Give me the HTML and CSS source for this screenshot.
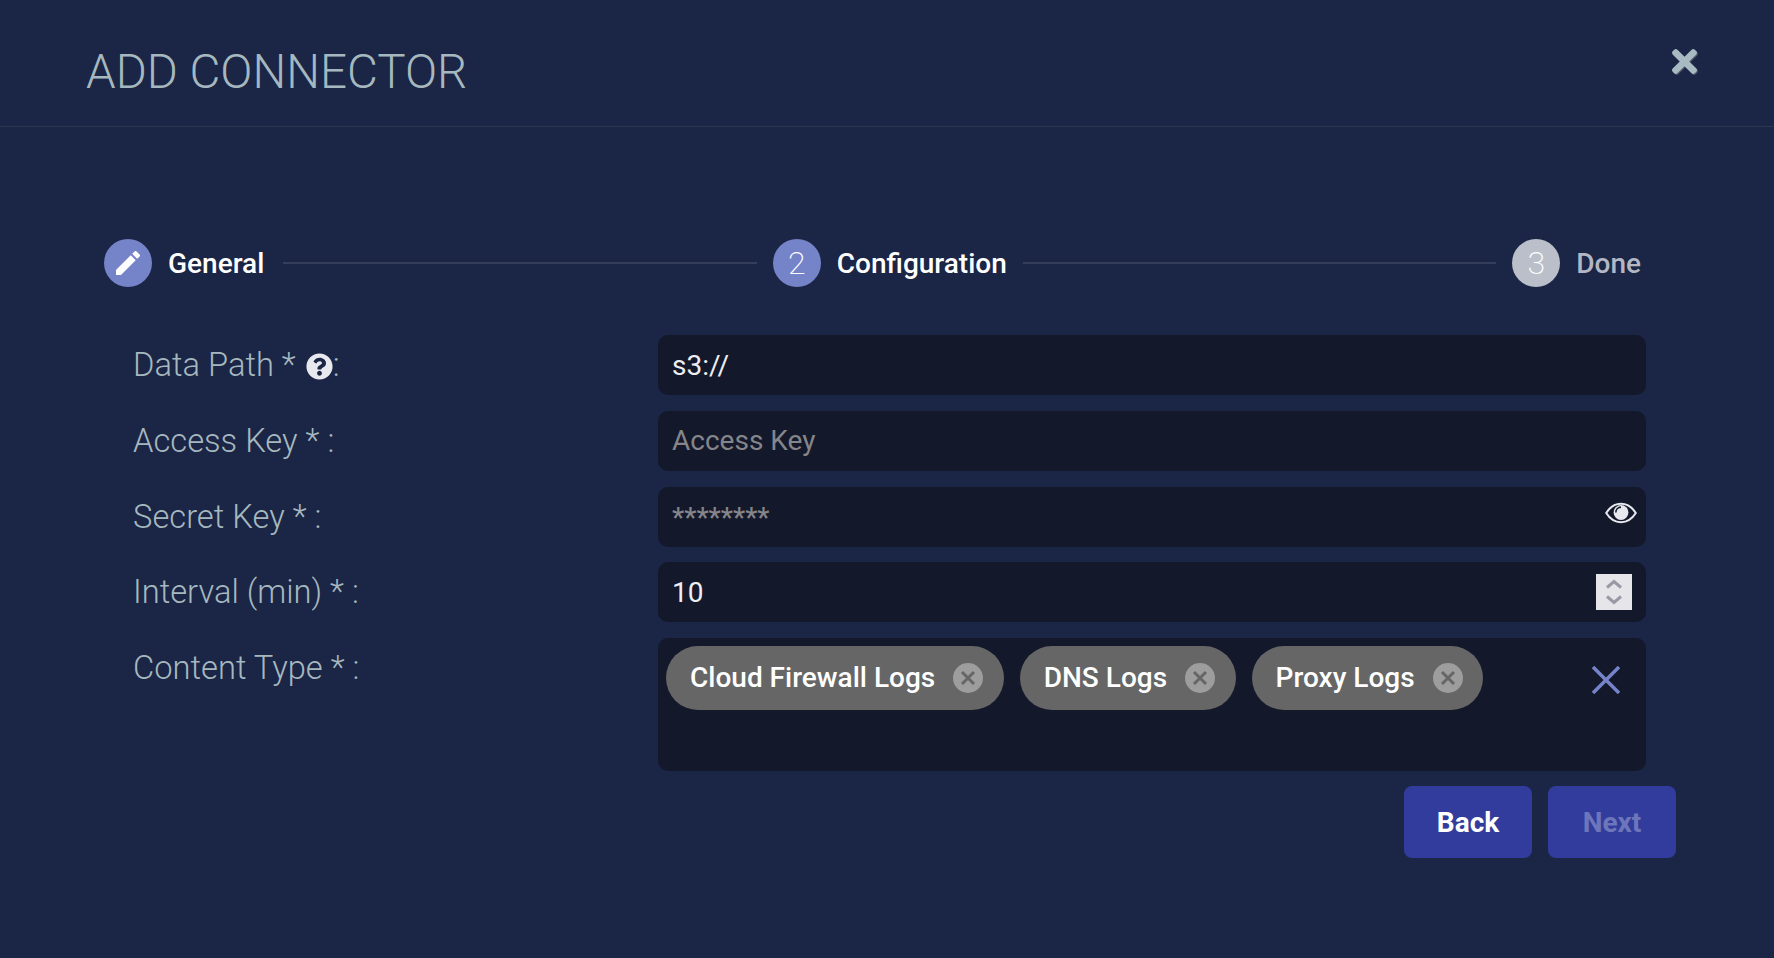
FILE: index.html
```html
<!DOCTYPE html>
<html lang="en">
<head>
<meta charset="utf-8">
<title>Add Connector</title>
<link rel="stylesheet" href="styles.css">
</head>
<body>
<div class="dialog">
  <header class="header">
    <h1 class="title">ADD CONNECTOR</h1>
    <button class="close" aria-label="Close">
      <svg class="close-icon" viewBox="0 80 352 352"><path d="M242.72 256l100.07-100.07c12.28-12.28 12.28-32.19 0-44.48l-22.24-22.24c-12.28-12.28-32.19-12.28-44.48 0L176 189.28 75.93 89.21c-12.28-12.28-32.19-12.28-44.48 0L9.21 111.45c-12.28 12.28-12.28 32.19 0 44.48L109.28 256 9.21 356.07c-12.28 12.28-12.28 32.19 0 44.48l22.24 22.24c12.28 12.28 32.2 12.28 44.48 0L176 322.72l100.07 100.07c12.28 12.28 32.2 12.28 44.48 0l22.24-22.24c12.28-12.28 12.28-32.19 0-44.48L242.72 256z"/></svg>
    </button>
  </header>

  <ol class="stepper">
    <li class="step step-first">
      <span class="step-circle">
        <svg class="pencil" viewBox="0 0 24 24"><path d="M3 17.25V21h3.75L17.81 9.94l-3.75-3.75L3 17.25zM20.71 7.04c.39-.39.39-1.02 0-1.41l-2.34-2.34c-.39-.39-1.02-.39-1.41 0l-1.83 1.83 3.75 3.75 1.83-1.83z"/></svg>
      </span>
      <span class="step-label">General</span>
    </li>
    <li class="step-line"></li>
    <li class="step">
      <span class="step-circle">2</span>
      <span class="step-label">Configuration</span>
    </li>
    <li class="step-line"></li>
    <li class="step step-todo">
      <span class="step-circle">3</span>
      <span class="step-label">Done</span>
    </li>
  </ol>

  <form class="form">
    <div class="row">
      <label class="label">Data Path * <svg class="help" viewBox="0 0 512 512"><path d="M504 256c0 136.997-111.043 248-248 248S8 392.997 8 256C8 119.083 119.043 8 256 8s248 111.083 248 248zM262.655 90c-54.497 0-89.255 22.957-116.549 63.758-3.536 5.286-2.353 12.415 2.715 16.258l34.699 26.31c5.205 3.947 12.621 3.008 16.665-2.122 17.864-22.658 30.113-35.797 57.303-35.797 20.429 0 45.698 13.148 45.698 32.958 0 14.976-12.363 22.667-32.534 33.976C247.128 238.528 216 254.941 216 296v4c0 6.627 5.373 12 12 12h56c6.627 0 12-5.373 12-12v-1.333c0-28.462 83.186-29.647 83.186-106.667 0-58.002-60.165-102-116.531-102zM256 338c-25.365 0-46 20.635-46 46 0 25.364 20.635 46 46 46s46-20.636 46-46c0-25.365-20.635-46-46-46z"/></svg>:</label>
      <div class="field">s3://</div>
    </div>
    <div class="row">
      <label class="label">Access Key * :</label>
      <div class="field field-placeholder">Access Key</div>
    </div>
    <div class="row">
      <label class="label">Secret Key * :</label>
      <div class="field field-placeholder field-secret">
        <span class="mask">********</span>
        <svg class="eye" viewBox="0 0 32 22">
          <path class="eye-outline" d="M1.2 11C5 5 10 1.8 16 1.8S27 5 30.8 11C27 17 22 20.2 16 20.2S5 17 1.2 11z"/>
          <circle class="eye-ball" cx="16" cy="10.5" r="7.4"/>
          <path class="eye-glint" d="M10.8 10.5c0-3 2.2-5.2 5.2-5.4"/>
        </svg>
      </div>
    </div>
    <div class="row">
      <label class="label">Interval (min) * :</label>
      <div class="field field-number">
        <span>10</span>
        <span class="spinner">
          <svg class="spinner-icon" viewBox="0 0 36 36"><path d="M11 13.500l7-6 7 6M11 22.500l7 6 7-6"/></svg>
        </span>
      </div>
    </div>
    <div class="row">
      <label class="label">Content Type * :</label>
      <div class="field-multi">
        <div class="chips">
          <span class="chip">Cloud Firewall Logs<svg class="chip-x" viewBox="0 0 30 30"><circle cx="15" cy="15" r="15"/><path d="M9 9l12 12M21 9L9 21"/></svg></span>
          <span class="chip">DNS Logs<svg class="chip-x" viewBox="0 0 30 30"><circle cx="15" cy="15" r="15"/><path d="M9 9l12 12M21 9L9 21"/></svg></span>
          <span class="chip">Proxy Logs<svg class="chip-x" viewBox="0 0 30 30"><circle cx="15" cy="15" r="15"/><path d="M9 9l12 12M21 9L9 21"/></svg></span>
        </div>
        <svg class="clear" viewBox="0 0 28 28"><path d="M1 1l26 26M27 1L1 27"/></svg>
      </div>
    </div>
  </form>

  <div class="actions">
    <button class="btn" type="button">Back</button>
    <button class="btn btn-disabled" type="button">Next</button>
  </div>
</div>
</body>
</html>
```

FILE: styles.css
```css
* { box-sizing: border-box; }

html, body {
  margin: 0;
  height: 100%;
  background: #1b2545;
}

body {
  font-family: Roboto, "Liberation Sans", sans-serif;
  overflow: hidden;
}

.dialog {
  width: 1774px;
  height: 958px;
}

.header {
  height: 127px;
  padding: 48px 77px 0 86px;
  border-bottom: 1px solid #2d3650;
  display: flex;
  justify-content: space-between;
  align-items: flex-start;
}

.title {
  margin: 0;
  font-size: 47.500px;
  line-height: 48px;
  font-weight: 300;
  color: #a6b8bf;
}

.close {
  padding: 0;
  border: 0;
  background: none;
  display: block;
  height: 27px;
}

.close-icon {
  display: block;
  width: 25px;
  height: 25px;
  fill: #a9bbc2;
  filter: drop-shadow(1px 1px 0 #4d5468);
}

.stepper {
  list-style: none;
  margin: 0;
  padding: 112px 133px 0 104px;
  display: flex;
  align-items: flex-start;
  height: 208px;
  gap: 16px;
}

.step {
  display: flex;
  align-items: center;
  gap: 16px;
  height: 48px;
}

.step-first { padding-right: 3px; }

.step-circle {
  width: 48px;
  height: 48px;
  border-radius: 50%;
  background: #7583c9;
  color: #fff;
  font-size: 32px;
  font-weight: 200;
  display: flex;
  align-items: center;
  justify-content: center;
}

.pencil {
  width: 32px;
  height: 32px;
  fill: #fff;
}

.step-label {
  font-size: 28px;
  font-weight: 500;
  color: #fff;
}

.step-todo .step-circle { background: #bbbfca; }
.step-todo .step-label { color: #b3b7c4; }

.step-line {
  flex: 1;
  height: 2px;
  margin-top: 23px;
  background: #343d5a;
}

.form {
  display: flex;
  flex-direction: column;
  gap: 15.75px;
  padding: 0 128px 0 133px;
}

.row {
  display: grid;
  grid-template-columns: 525px 988px;
}

.label {
  font-size: 32.700px;
  line-height: 60px;
  font-weight: 300;
  color: #a6b8bf;
  display: block;
}

.help {
  width: 27px;
  height: 27px;
  fill: #e8e9ee;
  vertical-align: -4px;
  margin-left: 2px;
}

.field {
  height: 60px;
  padding: 0 14px;
  background: #13182b;
  border-radius: 10px;
  display: flex;
  align-items: center;
  font-size: 28px;
  color: #eeeef2;
}

.field-placeholder { color: #85858a; }

.field-secret, .field-number { justify-content: space-between; }

.field-secret { padding-right: 9px; }

.mask {
  position: relative;
  top: 1px;
  font-size: 27.500px;
  font-weight: 500;
}

.eye {
  width: 32px;
  height: 22px;
  margin-top: -8px;
}

.eye-outline {
  fill: none;
  stroke: #e8e9ee;
  stroke-width: 2;
}

.eye-ball { fill: #e8e9ee; }

.eye-glint {
  fill: none;
  stroke: #13182b;
  stroke-width: 1.6;
}

.spinner {
  width: 36px;
  height: 36px;
  background: #e6e6ea;
  display: block;
}

.spinner-icon {
  display: block;
  width: 36px;
  height: 36px;
  fill: none;
  stroke: #9a9aa6;
  stroke-width: 3;
}

.field-multi {
  height: 133px;
  padding: 8px 26px 8px 8px;
  background: #13182b;
  border-radius: 10px;
  display: flex;
  justify-content: space-between;
  align-items: flex-start;
}

.chips {
  display: flex;
  gap: 16px;
}

.chip {
  height: 64px;
  padding: 0 20.500px 2px 24px;
  border-radius: 32px;
  background: #666666;
  color: #fff;
  font-size: 28px;
  font-weight: 500;
  display: flex;
  align-items: center;
  gap: 18px;
}

.chip-x {
  width: 30px;
  height: 30px;
  flex: none;
  margin-top: 2px;
}

.chip-x circle { fill: #9d9d9d; }

.chip-x path {
  fill: none;
  stroke: #666666;
  stroke-width: 3;
}

.clear {
  width: 28px;
  height: 28px;
  margin-top: 20px;
  fill: none;
  stroke: #7583c9;
  stroke-width: 3.500;
}

.actions {
  display: flex;
  justify-content: flex-end;
  gap: 16px;
  padding: 15px 98px 0 0;
}

.btn {
  width: 128px;
  height: 72px;
  border: 0;
  border-radius: 8px;
  background: #323c9c;
  color: #fff;
  font-family: inherit;
  font-size: 28px;
  font-weight: 700;
}

.btn-disabled { color: #6e76bb; }
```
